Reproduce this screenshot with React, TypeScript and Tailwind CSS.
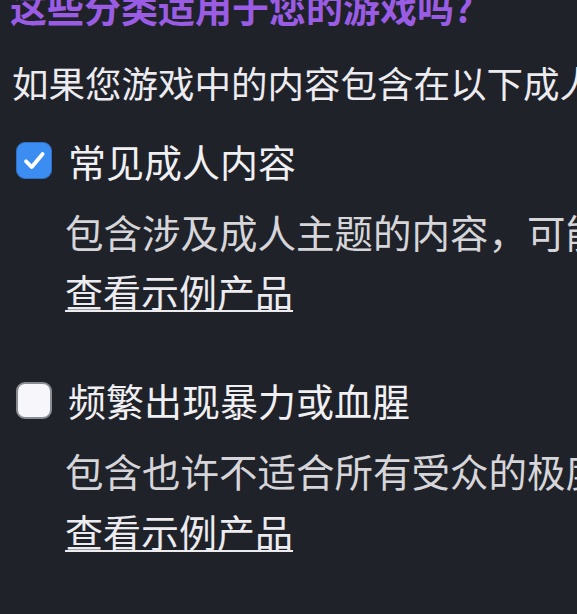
import React from "react";

const font = { fontFamily: '"Noto Sans CJK SC", "Noto Sans", sans-serif' };

function CheckedBox() {
  return (
    <div className="w-[36px] h-[37px] shrink-0 rounded-[9px] bg-[#3b8df2] border border-[#2f6fc4] flex items-center justify-center">
      <svg width="27" height="27" viewBox="0 0 24 24" fill="none">
        <path d="M4.5 12.8 L9.6 17.8 L19.2 6.2" stroke="#ffffff" strokeWidth="3.4" strokeLinecap="round" strokeLinejoin="round" />
      </svg>
    </div>
  );
}

function EmptyBox() {
  return (
    <div className="w-[36px] h-[37px] shrink-0 rounded-[9px] bg-[#f6f6fb] border-2 border-[#8a8c94]" />
  );
}

function Item({ checked, label, desc, first }: { checked: boolean; label: string; desc: string; first?: boolean }) {
  return (
    <div className={first ? "mt-[40px]" : "mt-[71px]"}>
      <div className="flex items-center h-[38px] pl-[6px]">
        {checked ? <CheckedBox /> : <EmptyBox />}
        <span className="ml-[16px] text-[38px] leading-none text-[#f0f0f3]">{label}</span>
      </div>
      <div className="pl-[55px]">
        <p className="mt-[32px] text-[38.5px] leading-none text-[#d6d6da]">{desc}</p>
        <a className="block mt-[22px] text-[38px] leading-none text-[#ececf0] underline decoration-2 underline-offset-[3px]">
          查看示例产品
        </a>
      </div>
    </div>
  );
}

export default function App() {
  return (
    <div className="w-[577px] h-[614px] overflow-hidden bg-[#202229] whitespace-nowrap" style={font}>
      <div className="pl-[10px]">
        <h1 className="mt-[-11px] text-[37px] leading-none font-bold text-[#9a5ce4]">这些分类适用于您的游戏吗?</h1>
        <p className="mt-[39px] pl-[2px] text-[36.5px] leading-none text-[#ececf0]">
          如果您游戏中的内容包含在以下成人内容类别中，请勾选。
        </p>
        <Item
          first
          checked
          label="常见成人内容"
          desc="包含涉及成人主题的内容，可能不适合所有年龄段的玩家。"
        />
        <Item
          checked={false}
          label="频繁出现暴力或血腥"
          desc="包含也许不适合所有受众的极度暴力或血腥内容。"
        />
      </div>
    </div>
  );
}
